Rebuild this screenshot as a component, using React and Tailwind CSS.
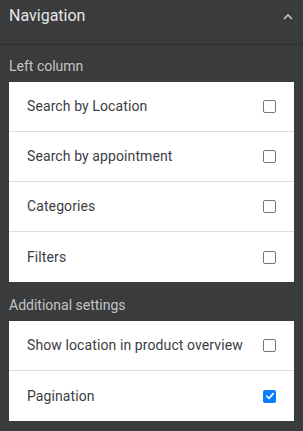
import React from 'react';

const Checkbox = ({ checked }) =>
  checked ? (
    <span className="w-[13px] h-[13px] rounded-[2px] bg-[#0b7bff] flex items-center justify-center">
      <svg viewBox="0 0 12 12" className="w-[10px] h-[10px]">
        <path d="M2.2 6.3 L4.8 8.8 L9.8 3.2" fill="none" stroke="white" strokeWidth="2" strokeLinecap="round" strokeLinejoin="round" />
      </svg>
    </span>
  ) : (
    <span className="w-[13px] h-[13px] rounded-[2px] border border-[#767676] bg-white" />
  );

const Row = ({ label, checked, last }) => (
  <div className={`h-[50px] flex items-center justify-between pl-[18px] pr-[18px] ${last ? '' : 'border-b border-[#dcdcdc]'}`}>
    <span className="text-[14px] tracking-[0.1px] text-[#3a3d44]">{label}</span>
    <Checkbox checked={checked} />
  </div>
);

const App = () => {
  return (
    <div className="w-[303px] h-[431px] bg-[#3a3b3d] font-['Roboto',sans-serif] overflow-hidden">
      <div className="h-[45px] flex items-start justify-between pl-[9px] pr-[10px] pt-[6px] border-b border-[#2e2f31]">
        <span className="text-[16px] leading-[20px] text-[#e6e6e6]">Navigation</span>
        <svg viewBox="0 0 10 6" className="w-[10px] h-[6px] mt-[8px]">
          <path d="M1 5 L5 1 L9 5" fill="none" stroke="#c8c8c8" strokeWidth="1.6" />
        </svg>
      </div>
      <div className="px-[9px]">
        <div className="h-[37px] flex items-end pb-[8px] text-[14px] leading-[16px] text-[#c4c4c4]">Left column</div>
        <div className="bg-white">
          <Row label="Search by Location" />
          <Row label="Search by appointment" />
          <Row label="Categories" />
          <Row label="Filters" last />
        </div>
        <div className="h-[39px] flex items-end pb-[8px] text-[14px] leading-[16px] text-[#c4c4c4]">Additional settings</div>
        <div className="bg-white">
          <Row label="Show location in product overview" />
          <Row label="Pagination" checked last />
        </div>
      </div>
    </div>
  );
};

export default App;
